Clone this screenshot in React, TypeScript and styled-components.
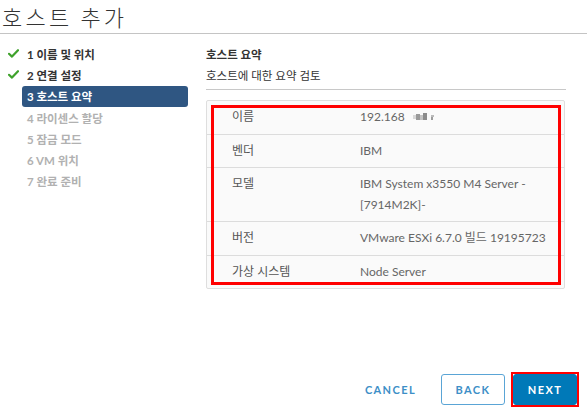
import React from "react";
import styled, { createGlobalStyle } from "styled-components";

const Global = createGlobalStyle`
  html, body { margin: 0; padding: 0; background: #fff; }
  body { font-family: Lato, "Noto Sans CJK KR", sans-serif; color: #333; }
`;

const Page = styled.div`
  width: 587px;
  height: 417px;
  display: flex;
  flex-direction: column;
  overflow: hidden;
`;

const TitleBar = styled.div`
  height: 34px;
  border-bottom: 1px solid #c4c4c4;
  box-sizing: border-box;
  padding-left: 2px;
  display: flex;
  align-items: flex-start;
`;

const Title = styled.h1`
  margin: 0;
  font-family: "Noto Sans CJK KR", sans-serif;
  font-weight: 300;
  font-size: 22px;
  letter-spacing: 3.2px;
  color: #333;
  line-height: 32px;
`;

const Body = styled.div`
  flex: 1;
  display: grid;
  grid-template-columns: 206px 360px;
  position: relative;
`;

const Nav = styled.ul`
  list-style: none;
  margin: 0;
  padding: 9px 0 0 0;
  display: flex;
  flex-direction: column;
`;

const NavItem = styled.li<{ $state: "done" | "active" | "todo" }>`
  height: 21.3px;
  display: flex;
  align-items: center;
  margin-left: ${(p) => (p.$state === "done" ? "8px" : "22px")};
  width: ${(p) => (p.$state === "done" ? "180px" : "166px")};
  padding-left: ${(p) => (p.$state === "done" ? "0" : "5px")};
  box-sizing: border-box;
  border-radius: 3px;
  background: ${(p) => (p.$state === "active" ? "#2f5682" : "transparent")};
  color: ${(p) => (p.$state === "active" ? "#fff" : p.$state === "done" ? "#333" : "#b1b1b1")};
  font-family: Lato, "Noto Sans CJK KR", sans-serif;
  font-size: 11.5px;
  font-weight: 700;
  white-space: nowrap;
`;

const Check = styled.svg`
  width: 11px;
  height: 9px;
  margin-right: 8px;
  flex: none;
`;

const Content = styled.div`
  display: flex;
  flex-direction: column;
  padding-top: 9px;
`;

const Heading = styled.div`
  font-size: 11.5px;
  font-weight: 700;
  color: #333;
  height: 21px;
  line-height: 23px;
`;

const Sub = styled.div`
  font-size: 11.5px;
  color: #333;
  height: 21px;
  line-height: 23px;
  padding-bottom: 4px;
  border-bottom: 1px solid #c8c8c8;
`;

const TableWrap = styled.div`
  position: relative;
  margin-top: 10px;
  width: 359px;
`;

const Table = styled.div`
  border: 1px solid #dedede;
  border-radius: 2px;
  background: #fafafa;
`;

const Row = styled.div`
  display: grid;
  grid-template-columns: 128px 1fr;
  padding: 6px 0 6px 25px;
  border-top: 1px solid #dcdcdc;
  &:first-child { border-top: none; }
  font-size: 12px;
  line-height: 20.5px;
`;

const Label = styled.div`
  color: #555;
`;

const Value = styled.div`
  color: #666;
  display: flex;
  flex-direction: column;
`;

const Highlight = styled.div`
  position: absolute;
  left: 5px;
  top: 5px;
  width: 350px;
  height: 180px;
  border: 3px solid #ff0000;
  box-sizing: border-box;
  pointer-events: none;
`;

const Footer = styled.div`
  height: 52px;
  box-sizing: border-box;
  display: flex;
  justify-content: flex-end;
  align-items: flex-start;
  padding: 9px 8px 0 0;
`;

const Btn = styled.button<{ $kind: "flat" | "outline" | "primary" }>`
  height: 31px;
  padding: 0 12px;
  border-radius: 3px;
  font-family: Lato, sans-serif;
  font-size: 11px;
  font-weight: 700;
  letter-spacing: 1.4px;
  cursor: pointer;
  box-sizing: border-box;
  border: 1px solid ${(p) => (p.$kind === "outline" ? "#5aa5d6" : p.$kind === "primary" ? "#0079b8" : "transparent")};
  background: ${(p) => (p.$kind === "primary" ? "#0079b8" : "#fff")};
  color: ${(p) => (p.$kind === "primary" ? "#fff" : "#3d8fc7")};
  width: ${(p) => (p.$kind === "flat" ? "auto" : "64px")};
  margin-right: ${(p) => (p.$kind === "flat" ? "12px" : p.$kind === "outline" ? "6px" : "0")};
`;

const PrimaryFrame = styled.div`
  border: 2px solid #ff0000;
  margin-top: -2px;
  display: flex;
`;

const Blur = styled.svg`
  width: 26px;
  height: 10px;
  margin-left: 8px;
  vertical-align: middle;
`;

const Line = styled.span`
  display: inline-flex;
  align-items: center;
`;

const CheckIcon = () => (
  <Check viewBox="0 0 11 9">
    <path d="M1 4.8 L4 7.6 L10 1.2" fill="none" stroke="#3fa22c" strokeWidth="2.2" strokeLinecap="round" strokeLinejoin="round" />
  </Check>
);

const steps: { n: string; s: "done" | "active" | "todo" }[] = [
  { n: "1 이름 및 위치", s: "done" },
  { n: "2 연결 설정", s: "done" },
  { n: "3 호스트 요약", s: "active" },
  { n: "4 라이센스 할당", s: "todo" },
  { n: "5 잠금 모드", s: "todo" },
  { n: "6 VM 위치", s: "todo" },
  { n: "7 완료 준비", s: "todo" },
];

export default function App() {
  return (
    <Page>
      <Global />
      <TitleBar>
        <Title>호스트 추가</Title>
      </TitleBar>
      <Body>
        <Nav>
          {steps.map((st) => (
            <NavItem key={st.n} $state={st.s}>
              {st.s === "done" && <CheckIcon />}
              {st.n}
            </NavItem>
          ))}
        </Nav>
        <Content>
          <Heading>호스트 요약</Heading>
          <Sub>호스트에 대한 요약 검토</Sub>
          <TableWrap>
            <Table>
              <Row>
                <Label>이름</Label>
                <Value>
                  <Line>
                    192.168
                    <Blur viewBox="0 0 26 10">
                      <rect x="0" y="3" width="3" height="4" fill="#d8d8d8" />
                      <rect x="3" y="2" width="4" height="6" fill="#9a9a9a" />
                      <rect x="7" y="3" width="3" height="5" fill="#c4c4c4" />
                      <rect x="10" y="1" width="4" height="7" fill="#8c8c8c" />
                      <rect x="18" y="3" width="3" height="2" fill="#bbbbbb" />
                      <rect x="18" y="5" width="2" height="3" fill="#9c9c9c" />
                    </Blur>
                  </Line>
                </Value>
              </Row>
              <Row>
                <Label>벤더</Label>
                <Value>IBM</Value>
              </Row>
              <Row>
                <Label>모델</Label>
                <Value>
                  <span>IBM System x3550 M4 Server -</span>
                  <span>[7914M2K]-</span>
                </Value>
              </Row>
              <Row>
                <Label>버전</Label>
                <Value>VMware ESXi 6.7.0 빌드 19195723</Value>
              </Row>
              <Row>
                <Label>가상 시스템</Label>
                <Value>Node Server</Value>
              </Row>
            </Table>
            <Highlight />
          </TableWrap>
        </Content>
      </Body>
      <Footer>
        <Btn $kind="flat">CANCEL</Btn>
        <Btn $kind="outline">BACK</Btn>
        <PrimaryFrame>
          <Btn $kind="primary">NEXT</Btn>
        </PrimaryFrame>
      </Footer>
    </Page>
  );
}
